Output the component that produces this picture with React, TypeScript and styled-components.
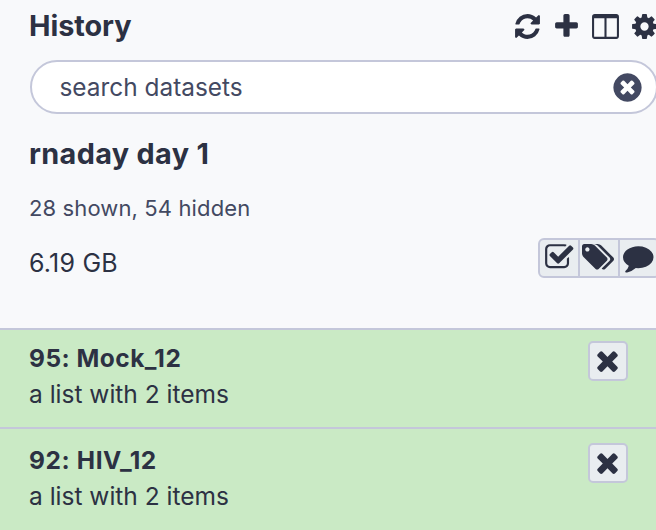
import React from "react";
import styled, { createGlobalStyle } from "styled-components";

const GlobalStyle = createGlobalStyle`
  *, *::before, *::after { box-sizing: border-box; }
  body {
    margin: 0;
    overflow: hidden;
    background: #f8f9fb;
    color: #2c3143;
    font-family: Inter, "Liberation Sans", sans-serif;
  }
`;

const Panel = styled.main`
  width: 658px;
  height: 530px;
  overflow: hidden;
  background: #f8f9fb;
`;

const Header = styled.header`
  display: flex;
  align-items: center;
  height: 52px;
  padding: 0 0 0 29px;
`;

const Line = styled.div<{ $size: number; $height: number; $bold?: boolean; $spacing?: number; $muted?: boolean }>`
  height: ${(p) => p.$height}px;
  margin: 0;
  line-height: ${(p) => p.$height}px;
  font-size: ${(p) => p.$size}px;
  font-weight: ${(p) => (p.$bold ? 700 : 400)};
  letter-spacing: ${(p) => p.$spacing ?? 0}px;
  color: ${(p) => (p.$muted ? "#434962" : "#2c3143")};
  white-space: nowrap;
`;

const Actions = styled.nav`
  display: flex;
  align-items: center;
  gap: 10px;
  margin: 0 -1px 0 auto;
`;

const Search = styled.div`
  display: flex;
  align-items: center;
  justify-content: space-between;
  width: 628px;
  height: 54px;
  margin: 8px 0 0 29.5px;
  padding: 0 11.5px 0 28px;
  border: 2px solid #c4c7da;
  border-radius: 27px;
  background: #fff;
  color: #434962;
`;

const Summary = styled.section`
  padding: 20px 0 0 29px;
  height: 214px;
`;

const Counts = styled.div`
  height: 64px;
  padding-top: 4px;
`;

const SizeRow = styled.div`
  display: flex;
  justify-content: space-between;
`;

const ButtonGroup = styled.div`
  display: flex;
  width: 122px;
  height: 40px;
  margin-right: -2px;
  border: 2px solid #c4c7da;
  border-radius: 6px;
  background: #e9edf0;
`;

const GroupButton = styled.button`
  display: flex;
  align-items: center;
  justify-content: center;
  width: 40px;
  height: 36px;
  padding: 0 2px 2px 0;
  border: 0;
  background: none;
  color: inherit;
  &:first-child { width: 38px; padding-right: 0; }
  & + & { border-left: 2px solid #c4c7da; }
`;

const Item = styled.article<{ $pad: number }>`
  display: flex;
  justify-content: space-between;
  height: ${(p) => 88 + p.$pad}px;
  padding: ${(p) => p.$pad}px 30px 0 29px;
  border-top: 2px solid #c4c7da;
  background: #caeac5;
  &:last-child { height: 103px; }
`;

const CloseButton = styled.button`
  display: flex;
  align-items: center;
  justify-content: center;
  width: 40px;
  height: 40px;
  padding: 0 1px 2px 0;
  border: 2px solid #c4c7da;
  border-radius: 5px;
  background: #e9edf0;
  color: inherit;
`;

const Glyph = styled.svg`
  display: block;
  flex: none;
  fill: currentColor;
  overflow: visible;
`;

const paths = {
  refresh: "M1639 1056q0 5-1 7-64 268-268 434.5t-478 166.5q-146 0-282.5-55t-243.5-157l-129 129q-19 19-45 19t-45-19-19-45v-448q0-26 19-45t45-19h448q26 0 45 19t19 45-19 45l-137 137q71 66 161 102t187 36q134 0 250-65t186-179q11-17 53-117 8-23 30-23h192q13 0 22.5 9.5t9.5 22.5zm25-800v448q0 26-19 45t-45 19h-448q-26 0-45-19t-19-45 19-45l138-138q-148-137-349-137-134 0-250 65t-186 179q-11 17-53 117-8 23-30 23h-199q-13 0-22.5-9.5t-9.5-22.5v-7q65-268 270-434.5t480-166.5q146 0 284 55.5t245 156.5l130-129q19-19 45-19t45 19 19 45z",
  plus: "M1600 736v192q0 40-28 68t-68 28h-416v416q0 40-28 68t-68 28h-192q-40 0-68-28t-28-68v-416h-416q-40 0-68-28t-28-68v-192q0-40 28-68t68-28h416v-416q0-40 28-68t68-28h192q40 0 68 28t28 68v416h416q40 0 68 28t28 68z",
  columns: "M224 1536h608v-1152h-640v1120q0 13 9.5 22.5t22.5 9.5zm1376-32v-1120h-640v1152h608q13 0 22.5-9.5t9.5-22.5zm128-1216v1216q0 66-47 113t-113 47h-1344q-66 0-113-47t-47-113v-1216q0-66 47-113t113-47h1344q66 0 113 47t47 113z",
  cog: "M1152 896q0-106-75-181t-181-75-181 75-75 181 75 181 181 75 181-75 75-181zm512-109v222q0 12-8 23t-20 13l-185 28q-19 54-39 91 35 50 107 138 10 12 10 25t-9 23q-27 37-99 108t-94 71q-12 0-26-9l-138-108q-44 23-91 38-16 136-29 186-7 28-36 28h-222q-14 0-24.5-8.5t-11.5-21.5l-28-184q-49-16-90-37l-141 107q-10 9-25 9-14 0-25-11-126-114-165-168-7-10-7-23 0-12 8-23 15-21 51-66.5t54-70.5q-27-50-41-99l-183-27q-13-2-21-12.5t-8-23.5v-222q0-12 8-23t19-13l186-28q14-46 39-92-40-57-107-138-10-12-10-24 0-10 9-23 26-36 98.5-107.5t94.5-71.5q13 0 26 10l138 107q44-23 91-38 16-136 29-186 7-28 36-28h222q14 0 24.5 8.5t11.5 21.5l28 184q49 16 90 37l142-107q9-9 24-9 13 0 25 10 129 119 165 170 7 8 7 22 0 12-8 23-15 21-51 66.5t-54 70.5q26 50 41 98l183 28q13 2 21 12.5t8 23.5z",
  clear: "M1277 1122q0-26-19-45l-181-181 181-181q19-19 19-45 0-27-19-46l-90-90q-19-19-46-19-26 0-45 19l-181 181-181-181q-19-19-45-19-27 0-46 19l-90 90q-19 19-19 46 0 26 19 45l181 181-181 181q-19 19-19 45 0 27 19 46l90 90q19 19 46 19 26 0 45-19l181-181 181 181q19 19 45 19 27 0 46-19l90-90q19-19 19-46zm387-226q0 209-103 385.5t-279.5 279.5-385.5 103-385.5-103-279.5-279.5-103-385.5 103-385.5 279.5-279.5 385.5-103 385.5 103 279.5 279.5 103 385.5z",
  times: "M1490 1322q0 40-28 68l-136 136q-28 28-68 28t-68-28l-294-294-294 294q-28 28-68 28t-68-28l-136-136q-28-28-28-68t28-68l294-294-294-294q-28-28-28-68t28-68l136-136q28-28 68-28t68 28l294 294 294-294q28-28 68-28t68 28l136 136q28 28 28 68t-28 68l-294 294 294 294q28 28 28 68z",
  check: "M1472 930v318q0 119-84.5 203.5t-203.5 84.5h-832q-119 0-203.5-84.5t-84.5-203.5v-832q0-119 84.5-203.5t203.5-84.5h832q63 0 117 25 15 7 18 23 3 17-9 29l-49 49q-10 10-23 10-3 0-9-2-23-6-45-6h-832q-66 0-113 47t-47 113v832q0 66 47 113t113 47h832q66 0 113-47t47-113v-254q0-13 9-22l64-64q10-10 23-10 6 0 12 3 20 8 20 29zm231-489l-814 814q-24 24-57 24t-57-24l-430-430q-24-24-24-57t24-57l110-110q24-24 57-24t57 24l263 263 647-647q24-24 57-24t57 24l110 110q24 24 24 57t-24 57z",
  tags: "M448 448q0-53-37.5-90.5t-90.5-37.5-90.5 37.5-37.5 90.5 37.5 90.5 90.5 37.5 90.5-37.5 37.5-90.5zm1067 576q0 53-37 90l-491 492q-39 37-91 37-53 0-90-37l-715-716q-38-37-64.5-101t-26.5-117v-416q0-52 38-90t90-38h416q53 0 117 26.5t102 64.5l715 714q37 39 37 91zm384 0q0 53-37 90l-491 492q-39 37-91 37-36 0-59-14t-53-45l470-470q37-37 37-90 0-52-37-91l-715-714q-38-38-102-64.5t-117-26.5h224q53 0 117 26.5t102 64.5l715 714q37 39 37 91z",
  comment: "M1792 896q0 174-120 321.5t-326 233-450 85.5q-70 0-145-8-198 175-460 242-49 14-114 22-17 2-30.5-9t-17.5-29v-1q-3-4-.5-12t2-10 4.5-9.5l6-9 7-8.5 8-9q7-8 31-34.5t34.5-38 31-39.5 32.5-51 27-59 26-76q-157-89-247.5-220t-90.5-281q0-130 71-248.5t191-204.5 286-136.5 348-50.5q244 0 450 85.5t326 233 120 321.5z",
};

function Icon({ name, size, box = "0 0 1792 1792" }: { name: keyof typeof paths; size: number; box?: string }) {
  return (
    <Glyph width={size} height={size} viewBox={box} aria-hidden="true">
      <path d={paths[name]} />
    </Glyph>
  );
}

const datasets = [
  { title: "95: Mock_12", pad: 11, spacing: 0.48 },
  { title: "92: HIV_12", pad: 14, spacing: 0.6 },
];

export default function App() {
  return (
    <>
      <GlobalStyle />
      <Panel>
        <Header>
          <Line as="h1" $size={28.8} $height={52} $bold $spacing={-0.05}>History</Line>
          <Actions>
            <Icon name="refresh" size={29} />
            <Icon name="plus" size={29} />
            <Icon name="columns" size={29} />
            <Icon name="cog" size={29} />
          </Actions>
        </Header>
        <Search>
          <Line $size={24.4} $height={49} $muted>search datasets</Line>
          <Icon name="clear" size={33} />
        </Search>
        <Summary>
          <Line as="h2" $size={28.8} $height={40} $bold $spacing={0.35}>rnaday day 1</Line>
          <Counts>
            <Line $size={22} $height={60} $muted $spacing={0.12}>28 shown, 54 hidden</Line>
          </Counts>
          <SizeRow>
            <Line $size={25} $height={51} $spacing={0.2}>6.19 GB</Line>
            <ButtonGroup>
              <GroupButton aria-label="Select datasets"><Icon name="check" size={30.5} /></GroupButton>
              <GroupButton aria-label="Edit tags"><Icon name="tags" size={32} box="0 0 1899 1792" /></GroupButton>
              <GroupButton aria-label="Edit annotation"><Icon name="comment" size={30.5} /></GroupButton>
            </ButtonGroup>
          </SizeRow>
        </Summary>
        {datasets.map((d) => (
          <Item key={d.title} $pad={d.pad}>
            <div>
              <Line $size={24.5} $height={34} $bold $spacing={d.spacing}>{d.title}</Line>
              <Line $size={24.5} $height={38}>a list with 2 items</Line>
            </div>
            <CloseButton aria-label="Delete"><Icon name="times" size={31} /></CloseButton>
          </Item>
        ))}
      </Panel>
    </>
  );
}
